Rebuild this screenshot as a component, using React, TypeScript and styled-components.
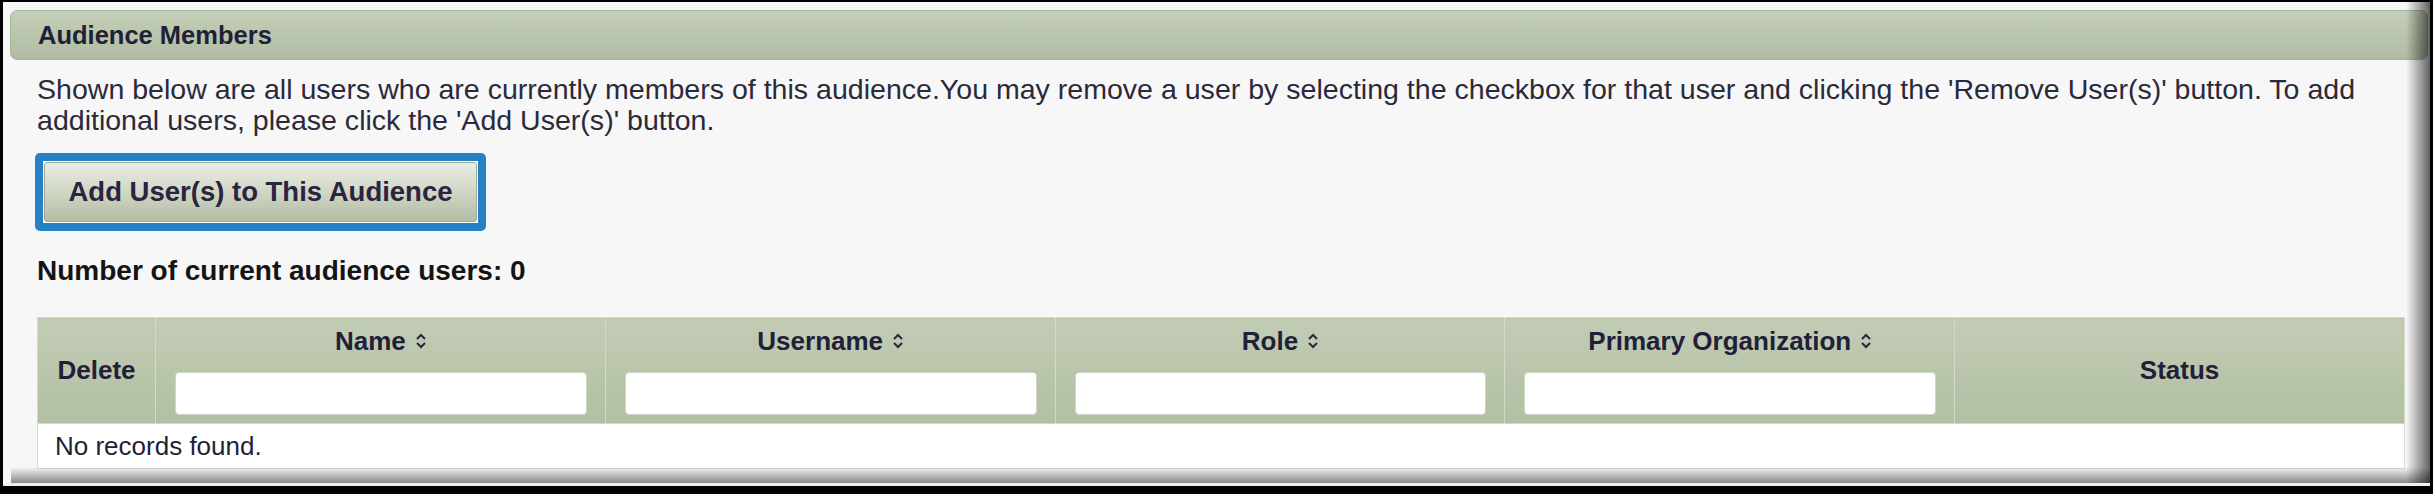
import styled, { createGlobalStyle } from "styled-components";

const GlobalStyle = createGlobalStyle`
  html, body {
    margin: 0;
    padding: 0;
    background: #000;
  }
  body {
    font-family: "Liberation Sans", Arial, sans-serif;
  }
`;

const Frame = styled.div`
  width: 2433px;
  height: 494px;
  box-sizing: border-box;
  padding: 2px 3px 8px 3px;
  background: #000;
`;

const Sheet = styled.div`
  position: relative;
  height: 100%;
  box-sizing: border-box;
  padding: 8px 2px 0 7px;
  background: #f7f7f7;
  border-bottom: 3px solid #eeeeee;
  overflow: hidden;

  &::before {
    content: "";
    position: absolute;
    top: 0;
    right: 0;
    bottom: 0;
    width: 24px;
    background: linear-gradient(to right, rgba(0, 0, 0, 0), rgba(0, 0, 0, 0.6));
    pointer-events: none;
  }

  &::after {
    content: "";
    position: absolute;
    left: 8px;
    right: 0;
    bottom: 0;
    height: 16px;
    background: linear-gradient(to bottom, rgba(0, 0, 0, 0), rgba(0, 0, 0, 0.45));
    pointer-events: none;
  }
`;

const PanelHeader = styled.div`
  height: 50px;
  box-sizing: border-box;
  display: flex;
  align-items: center;
  padding-left: 27px;
  border: 1px solid #a9b49c;
  border-radius: 7px;
  background: linear-gradient(to bottom, #c4ceb8, #b0bca2);
  font-size: 25.5px;
  font-weight: bold;
  color: #1f2137;
`;

const PanelBody = styled.div`
  padding: 0 23px 0 27px;
`;

const Intro = styled.p`
  margin: 14px 0 0;
  font-size: 28.55px;
  line-height: 31px;
  color: #2a2a3a;
`;

const Highlight = styled.div`
  width: fit-content;
  margin: 17px 0 0 -2px;
  padding: 1px;
  border: 8px solid #2680c6;
  border-radius: 5px;
  background: #fff;
`;

const AddButton = styled.button`
  display: block;
  width: 433px;
  height: 60px;
  padding: 0;
  border: 1px solid #9fa993;
  border-radius: 3px;
  background: linear-gradient(to bottom, #eaede4, #d3d9c9 45%, #b2bda4);
  font-family: inherit;
  font-size: 27.5px;
  font-weight: bold;
  color: #2b2440;
  cursor: pointer;
`;

const Count = styled.div`
  margin-top: 24px;
  font-size: 28px;
  font-weight: bold;
  line-height: 31px;
  color: #141414;
`;

const Table = styled.table`
  margin-top: 31px;
  width: 2368px;
  border-collapse: collapse;
  table-layout: fixed;
`;

const HeadCell = styled.th<{ $middle?: boolean }>`
  padding: ${(p) => (p.$middle ? "0" : "8px 18px 8px 19px")};
  vertical-align: ${(p) => (p.$middle ? "middle" : "top")};
  background: linear-gradient(to bottom, #c2ccb5, #b2bfa3);
  border: 1px solid #d3dac8;
  font-size: 26px;
  font-weight: bold;
  color: #222038;
  text-align: center;
`;

const Label = styled.div`
  display: flex;
  align-items: center;
  justify-content: center;
  gap: 9px;
  line-height: 30px;
`;

const FilterInput = styled.input`
  display: block;
  margin-top: 16px;
  width: 100%;
  height: 43px;
  box-sizing: border-box;
  border: 1px solid #d0d6c6;
  border-radius: 4px;
  background: #fff;
`;

const EmptyCell = styled.td`
  height: 44px;
  padding: 0 17px;
  background: #fff;
  border: 1px solid #d9d9d9;
  font-size: 26px;
  color: #1f1f36;
`;

const SortIcon = () => (
  <svg width="12" height="18" viewBox="0 0 12 18" fill="none">
    <path d="M2 7 L6 3 L10 7" stroke="#2b2440" strokeWidth="2" />
    <path d="M2 11 L6 15 L10 11" stroke="#2b2440" strokeWidth="2" />
  </svg>
);

const filterColumns = ["Name", "Username", "Role", "Primary Organization"];

export default function App() {
  return (
    <>
      <GlobalStyle />
      <Frame>
        <Sheet>
          <PanelHeader>Audience Members</PanelHeader>
          <PanelBody>
            <Intro>
              Shown below are all users who are currently members of this audience.You may
              remove a user by selecting the checkbox for that user and clicking the 'Remove
              User(s)' button. To add additional users, please click the 'Add User(s)' button.
            </Intro>
            <Highlight>
              <AddButton>Add User(s) to This Audience</AddButton>
            </Highlight>
            <Count>Number of current audience users: 0</Count>
            <Table>
              <colgroup>
                <col style={{ width: 118 }} />
                <col />
                <col />
                <col />
                <col />
                <col />
              </colgroup>
              <thead>
                <tr>
                  <HeadCell $middle>Delete</HeadCell>
                  {filterColumns.map((name) => (
                    <HeadCell key={name}>
                      <Label>
                        {name}
                        <SortIcon />
                      </Label>
                      <FilterInput type="text" />
                    </HeadCell>
                  ))}
                  <HeadCell $middle>Status</HeadCell>
                </tr>
              </thead>
              <tbody>
                <tr>
                  <EmptyCell colSpan={6}>No records found.</EmptyCell>
                </tr>
              </tbody>
            </Table>
          </PanelBody>
        </Sheet>
      </Frame>
    </>
  );
}
